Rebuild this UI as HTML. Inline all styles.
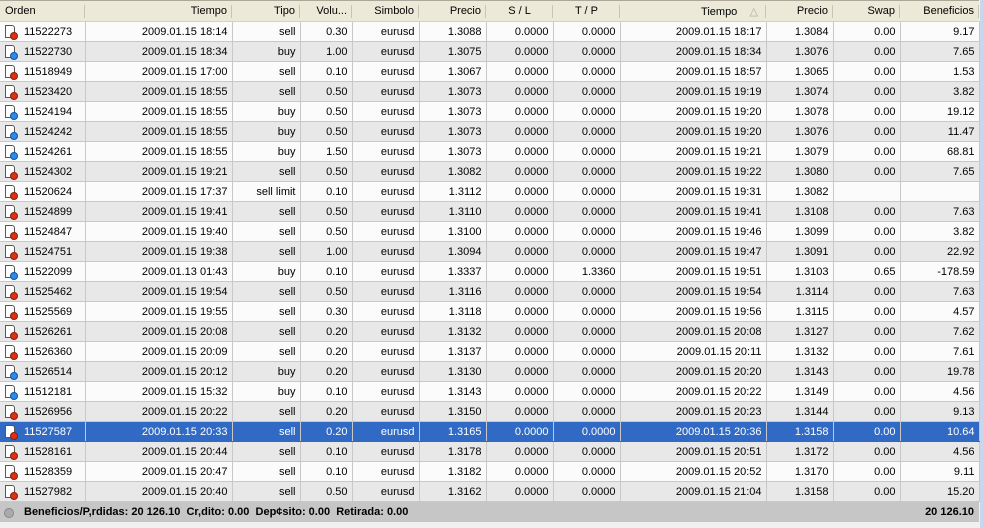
<!DOCTYPE html>
<html><head><meta charset="utf-8"><style>
body{margin:0;width:983px;height:528px;overflow:hidden;background:#f0f0f0;font-family:"Liberation Sans",Tahoma,sans-serif;font-size:11px;color:#000;position:relative}
table{position:absolute;left:0;top:0;border-collapse:collapse;table-layout:fixed;width:979px}
th{height:21px;padding:0 5px;font-weight:normal;text-align:right;background:#ece9d8;border-bottom:1px solid #d6d2c2;border-top:1px solid #aca899;box-sizing:border-box;white-space:nowrap;position:relative}
th:after{content:"";position:absolute;right:0;top:4px;height:13px;border-right:1px solid #c7c5b2}
td{height:19px;padding:0 4px;text-align:right;border:1px solid #c8c8c8;border-top:none;white-space:nowrap;overflow:hidden}
td:first-child{text-align:left;padding-left:24px;position:relative;border-left:none}
tr:nth-child(even) td{background:#fbfbfb}
tr:nth-child(odd) td{background:#e8e8e8}
tr.sel td{background:#316ac5;color:#fff;border-color:#316ac5 #c8c8c8}
td i{position:absolute;left:5px;top:3px;width:10px;height:13px;border:1px solid #555;background:#fff;box-sizing:border-box;border-radius:0 3px 0 0}
td i:after{content:"";position:absolute;left:4px;top:6px;width:8px;height:8px;border-radius:50%;background:#e03010;border:1px solid #802010;box-sizing:border-box}
td i.b:after{background:#2a8ce8;border-color:#1050a0}
.foot{position:absolute;left:0;top:502px;width:979px;height:20px;background:#c6c6c6;font-weight:bold;line-height:20px}
.foot .d{position:absolute;left:4px;top:6px;width:8px;height:8px;border-radius:50%;background:#aaa;border:1px solid #888}
.sb{position:absolute;left:980px;top:0;width:3px;height:528px;background:#c9d6ef}
</style></head><body>
<table>
<colgroup><col style="width:85px"><col style="width:147px"><col style="width:68px"><col style="width:52px"><col style="width:67px"><col style="width:67px"><col style="width:67px"><col style="width:67px"><col style="width:146px"><col style="width:67px"><col style="width:67px"><col style="width:79px"></colgroup>
<tr><th style="text-align:left">Orden</th><th>Tiempo</th><th>Tipo</th><th>Volu...</th><th>Simbolo</th><th>Precio</th><th style="text-align:center">S / L</th><th style="text-align:center">T / P</th><th style="padding-right:8px">Tiempo &nbsp;&nbsp;&nbsp;<span style="color:#aaa">△</span></th><th>Precio</th><th>Swap</th><th>Beneficios</th></tr>
<tr><td><i></i>11522273</td><td>2009.01.15 18:14</td><td>sell</td><td>0.30</td><td>eurusd</td><td>1.3088</td><td>0.0000</td><td>0.0000</td><td>2009.01.15 18:17</td><td>1.3084</td><td>0.00</td><td>9.17</td></tr>
<tr><td><i class="b"></i>11522730</td><td>2009.01.15 18:34</td><td>buy</td><td>1.00</td><td>eurusd</td><td>1.3075</td><td>0.0000</td><td>0.0000</td><td>2009.01.15 18:34</td><td>1.3076</td><td>0.00</td><td>7.65</td></tr>
<tr><td><i></i>11518949</td><td>2009.01.15 17:00</td><td>sell</td><td>0.10</td><td>eurusd</td><td>1.3067</td><td>0.0000</td><td>0.0000</td><td>2009.01.15 18:57</td><td>1.3065</td><td>0.00</td><td>1.53</td></tr>
<tr><td><i></i>11523420</td><td>2009.01.15 18:55</td><td>sell</td><td>0.50</td><td>eurusd</td><td>1.3073</td><td>0.0000</td><td>0.0000</td><td>2009.01.15 19:19</td><td>1.3074</td><td>0.00</td><td>3.82</td></tr>
<tr><td><i class="b"></i>11524194</td><td>2009.01.15 18:55</td><td>buy</td><td>0.50</td><td>eurusd</td><td>1.3073</td><td>0.0000</td><td>0.0000</td><td>2009.01.15 19:20</td><td>1.3078</td><td>0.00</td><td>19.12</td></tr>
<tr><td><i class="b"></i>11524242</td><td>2009.01.15 18:55</td><td>buy</td><td>0.50</td><td>eurusd</td><td>1.3073</td><td>0.0000</td><td>0.0000</td><td>2009.01.15 19:20</td><td>1.3076</td><td>0.00</td><td>11.47</td></tr>
<tr><td><i class="b"></i>11524261</td><td>2009.01.15 18:55</td><td>buy</td><td>1.50</td><td>eurusd</td><td>1.3073</td><td>0.0000</td><td>0.0000</td><td>2009.01.15 19:21</td><td>1.3079</td><td>0.00</td><td>68.81</td></tr>
<tr><td><i></i>11524302</td><td>2009.01.15 19:21</td><td>sell</td><td>0.50</td><td>eurusd</td><td>1.3082</td><td>0.0000</td><td>0.0000</td><td>2009.01.15 19:22</td><td>1.3080</td><td>0.00</td><td>7.65</td></tr>
<tr><td><i></i>11520624</td><td>2009.01.15 17:37</td><td>sell limit</td><td>0.10</td><td>eurusd</td><td>1.3112</td><td>0.0000</td><td>0.0000</td><td>2009.01.15 19:31</td><td>1.3082</td><td></td><td></td></tr>
<tr><td><i></i>11524899</td><td>2009.01.15 19:41</td><td>sell</td><td>0.50</td><td>eurusd</td><td>1.3110</td><td>0.0000</td><td>0.0000</td><td>2009.01.15 19:41</td><td>1.3108</td><td>0.00</td><td>7.63</td></tr>
<tr><td><i></i>11524847</td><td>2009.01.15 19:40</td><td>sell</td><td>0.50</td><td>eurusd</td><td>1.3100</td><td>0.0000</td><td>0.0000</td><td>2009.01.15 19:46</td><td>1.3099</td><td>0.00</td><td>3.82</td></tr>
<tr><td><i></i>11524751</td><td>2009.01.15 19:38</td><td>sell</td><td>1.00</td><td>eurusd</td><td>1.3094</td><td>0.0000</td><td>0.0000</td><td>2009.01.15 19:47</td><td>1.3091</td><td>0.00</td><td>22.92</td></tr>
<tr><td><i class="b"></i>11522099</td><td>2009.01.13 01:43</td><td>buy</td><td>0.10</td><td>eurusd</td><td>1.3337</td><td>0.0000</td><td>1.3360</td><td>2009.01.15 19:51</td><td>1.3103</td><td>0.65</td><td>-178.59</td></tr>
<tr><td><i></i>11525462</td><td>2009.01.15 19:54</td><td>sell</td><td>0.50</td><td>eurusd</td><td>1.3116</td><td>0.0000</td><td>0.0000</td><td>2009.01.15 19:54</td><td>1.3114</td><td>0.00</td><td>7.63</td></tr>
<tr><td><i></i>11525569</td><td>2009.01.15 19:55</td><td>sell</td><td>0.30</td><td>eurusd</td><td>1.3118</td><td>0.0000</td><td>0.0000</td><td>2009.01.15 19:56</td><td>1.3115</td><td>0.00</td><td>4.57</td></tr>
<tr><td><i></i>11526261</td><td>2009.01.15 20:08</td><td>sell</td><td>0.20</td><td>eurusd</td><td>1.3132</td><td>0.0000</td><td>0.0000</td><td>2009.01.15 20:08</td><td>1.3127</td><td>0.00</td><td>7.62</td></tr>
<tr><td><i></i>11526360</td><td>2009.01.15 20:09</td><td>sell</td><td>0.20</td><td>eurusd</td><td>1.3137</td><td>0.0000</td><td>0.0000</td><td>2009.01.15 20:11</td><td>1.3132</td><td>0.00</td><td>7.61</td></tr>
<tr><td><i class="b"></i>11526514</td><td>2009.01.15 20:12</td><td>buy</td><td>0.20</td><td>eurusd</td><td>1.3130</td><td>0.0000</td><td>0.0000</td><td>2009.01.15 20:20</td><td>1.3143</td><td>0.00</td><td>19.78</td></tr>
<tr><td><i class="b"></i>11512181</td><td>2009.01.15 15:32</td><td>buy</td><td>0.10</td><td>eurusd</td><td>1.3143</td><td>0.0000</td><td>0.0000</td><td>2009.01.15 20:22</td><td>1.3149</td><td>0.00</td><td>4.56</td></tr>
<tr><td><i></i>11526956</td><td>2009.01.15 20:22</td><td>sell</td><td>0.20</td><td>eurusd</td><td>1.3150</td><td>0.0000</td><td>0.0000</td><td>2009.01.15 20:23</td><td>1.3144</td><td>0.00</td><td>9.13</td></tr>
<tr class="sel"><td><i></i>11527587</td><td>2009.01.15 20:33</td><td>sell</td><td>0.20</td><td>eurusd</td><td>1.3165</td><td>0.0000</td><td>0.0000</td><td>2009.01.15 20:36</td><td>1.3158</td><td>0.00</td><td>10.64</td></tr>
<tr><td><i></i>11528161</td><td>2009.01.15 20:44</td><td>sell</td><td>0.10</td><td>eurusd</td><td>1.3178</td><td>0.0000</td><td>0.0000</td><td>2009.01.15 20:51</td><td>1.3172</td><td>0.00</td><td>4.56</td></tr>
<tr><td><i></i>11528359</td><td>2009.01.15 20:47</td><td>sell</td><td>0.10</td><td>eurusd</td><td>1.3182</td><td>0.0000</td><td>0.0000</td><td>2009.01.15 20:52</td><td>1.3170</td><td>0.00</td><td>9.11</td></tr>
<tr><td><i></i>11527982</td><td>2009.01.15 20:40</td><td>sell</td><td>0.50</td><td>eurusd</td><td>1.3162</td><td>0.0000</td><td>0.0000</td><td>2009.01.15 21:04</td><td>1.3158</td><td>0.00</td><td>15.20</td></tr>
</table>
<div class="foot"><span class="d"></span><span style="position:absolute;left:24px">Beneficios/P,rdidas: 20 126.10 &nbsp;Cr,dito: 0.00 &nbsp;Dep¢sito: 0.00 &nbsp;Retirada: 0.00</span><span style="position:absolute;right:5px">20 126.10</span></div>
<div class="sb"></div>
</body></html>
